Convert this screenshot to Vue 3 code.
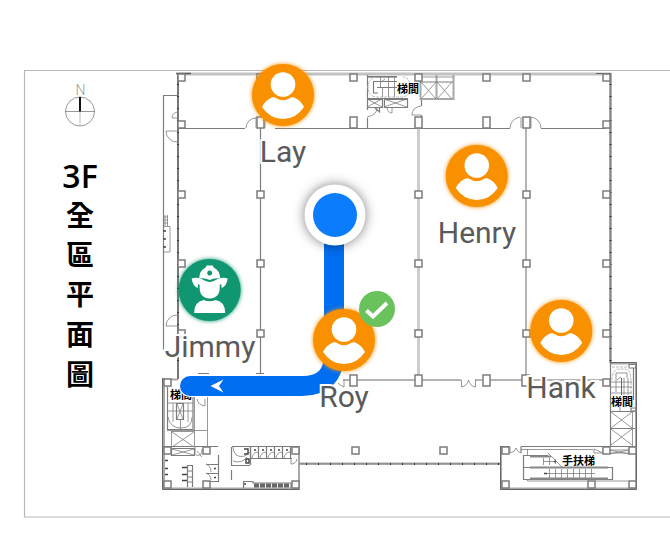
<script setup>
const people = [
  { name: 'Lay', x: 283, y: 95, role: 'member' },
  { name: 'Henry', x: 477, y: 176, role: 'member' },
  { name: 'Jimmy', x: 210, y: 290, role: 'guide' },
  { name: 'Roy', x: 344, y: 340, role: 'member', checked: true },
  { name: 'Hank', x: 561, y: 331, role: 'member' }
]
const place = (p) => ({ left: (p.x / 670) * 100 + '%', top: (p.y / 543) * 100 + '%' })

const title = ['全', '區', '平', '面', '圖']

const grid = [181, 260, 418, 526, 606]
const columns = [
  ...[181, 260, 353, 418, 486, 526, 606].map((x) => [x, 77]),
  [181, 124],
  [606, 124],
  ...[194, 263, 333].flatMap((y) => grid.map((x) => [x, y])),
  [606, 382],
  [355, 450],
  [443, 450],
  [167, 382],
  [167, 450],
  [206, 450],
  [295, 450],
  [167, 484],
  [206, 484],
  [295, 484],
  [505, 450],
  [606, 450],
  [632, 450],
  [505, 484],
  [591, 484],
  [632, 484]
]
const tallColumns = [
  ...[260, 353, 418, 486, 526].map((x) => [x, 122]),
  ...[353, 418, 486, 525].map((x) => [x, 380])
]
const range = (from, to, step) => {
  const out = []
  for (let v = from; v <= to; v += step) out.push(v)
  return out
}
const wallTicks = range(84, 370, 12)
const southTicks = range(306, 498, 12)
</script>

<template>
  <main class="map">
    <svg class="plan" viewBox="0 0 670 543" role="img" aria-label="3F 全區平面圖">
      <!-- sheet frame -->
      <path class="frame" d="M672 70.500H24.500V517H672" />

      <!-- compass -->
      <text class="north" x="80.500" y="95">N</text>
      <circle class="thin" cx="80" cy="111.500" r="14.500" />
      <path class="thin" d="M65 111.500H95" />
      <path class="faint" d="M80 111V126" />
      <path class="needle" d="M80 97V111.500" />

      <!-- sheet title -->
      <text class="floor" x="80" y="188">3F</text>
      <text v-for="(c, i) in title" :key="c" class="title" x="80" :y="226 + i * 40 - (i > 1 ? 1 : 0)">{{ c }}</text>

      <!-- outer walls -->
      <path class="double" d="M178 74H611" />
      <path class="wall" d="M178 73V379M176 73.500H191" />
      <path class="grey" d="M610 73V363" />
      <path class="wall1" d="M611 73V363M596 73.500H611" />
      <path v-for="y in wallTicks" :key="'w' + y" class="tick" :d="`M609.5 ${y}.5H611.5M177 ${y}.5H179`" />
      <path class="line" d="M177 95.500H163.500V350" />
      <path class="thin" d="M172 118A6 6 0 0 1 178 112M172 118H178M166 131H178M166 131A11 11 0 0 0 178 142M166 326H178M166 326A11 11 0 0 1 178 315" />
      <path class="thin" d="M163 226.500H170V252H163M163 217H168M163 220H168M163 223H168M165 215V226M167.500 215V226" />
      <path class="dots" d="M163 231H166M163 239H166M163 247H166" />

      <!-- inner walls -->
      <path class="line" d="M178 128.500H245M275 128.500H510M541 128.500H606" />
      <path class="line" d="M260.500 128V374" />
      <path class="pale" d="M418.500 128V376" />
      <path class="grey2" d="M526 128V380" />
      <path class="grey2" d="M343 380H461M475 380H482M490 380H606" />
      <path class="thin" d="M246 128A10 10 0 0 1 256 118M256 117V128M265 117V128M510 128A12 11 0 0 1 520 117M541 128A12 11 0 0 0 531 117M521 117V128M531 117V128" />
      <path class="thin" d="M461.500 380V387Q467 386 468.500 380Q470 386 475.500 387V380M344 380V387Q340 385 338 383" />
      <path class="line" d="M198 373.500H209M256 373.500H264" />

      <!-- north stair and lifts -->
      <path class="grey" d="M367 77H397M420.500 77V99H453.500V75M436.500 75V99" />
      <path class="line" d="M367.500 75V98.500H408M420 82H453" />
      <path class="thin" d="M420 77H453M421 82L436 99M436 82L421 99M437 82L452 99M452 82L437 99" />
      <path class="faint dash" d="M376 77Q368 79 368 88Q369 97 377 97H403Q410 96 410 86Q410 78 403 77" />
      <path class="line" d="M373 81.500H397M373.500 81.500V93H378M377 87.500H397M368 76.500H397" />
      <path class="thin" d="M380.500 77V87M388.500 77V97M394.500 77V97M382.500 88V97M381 82L385 79" />
      <path class="line" d="M367.500 99.500H382.500V107.500H367.500ZM384.500 99.500H407.500V107.500H384.500Z" />
      <path class="thin" d="M367 99L382 107M382 99L367 107M384 99L407 107M407 99L384 107" />
      <path class="line" d="M367.500 107V110M367.500 118V128M375 108L379.500 112V107M421.500 100V106M421.500 115V128" />
      <path class="thin" d="M367 117Q377 115 377 108M387 108Q388 113 392 113V107M421.500 106Q412 107 412 115H421" />

      <!-- south-west stair, lift and wash rooms -->
      <path class="grey" d="M164 378V489M162 379.500H178M162 488.500H299V446" />
      <path class="wall1" d="M162.500 378V489.500H299.500M178 378V379" />
      <path class="line" d="M167.500 387V429.500H193V396M163 446.500H218M232 446.500H299" />
      <path class="thin" d="M194.500 397V446M207.500 397V446M167 430.500H207M168 403H193M168 411H193M173 403V422M188 403V422M180.500 419V429M168 417Q170 428 181 428Q192 428 192 417" />
      <path class="line" d="M176.500 403.500H183.500V419.500H176.500Z" />
      <path class="thin" d="M177 404L183 419M183 404L177 419M171.500 431V446M171 431.500H194M172 432L194 447M194 432L172 447" />
      <path class="line" d="M171.500 448.500H194.500V455.500H171.500Z" />
      <path class="thin" d="M172 449L194 455M194 449L172 455M197 399Q198 405 205 406V399M195 455V447M202 449Q202 457 196 455M197 451L202 457" />
      <path class="line" d="M218.500 455V482M206 464.500H218M206 473.500H218M206 481.500H218M231.500 447V465.500H250M231.500 470V480M250.500 447V465" />
      <path class="thin" d="M206 464Q211 466 211 472M206 473Q211 475 211 480" />
      <path class="dots" d="M214 468.500H216M214 477.500H216M182 467.500H187M182 474.500H187M182 480.500H187M165 460.500H168M165 468.500H168M165 474.500H168" />
      <path class="line" d="M187.500 465V487M192.500 465V487M187 465.500H193M187 471H193M187 477H193M187 482H193" />
      <path class="thin" d="M233 447Q234 459 245 456L250 452M233 461Q242 464 247 457" />
      <path class="fixture" d="M244 449H248V454H244M246 459H249V463H246Z" />
      <path class="line" d="M250.500 447V458.500H292M258.500 447V458M266.500 447V458M274.500 447V458M282.500 447V458M290.500 447V458" />
      <path class="thin" d="M252 458Q253 452 258 452M260 458Q261 452 266 452M268 458Q269 452 274 452M276 458Q277 452 282 452M284 458Q285 452 290 452M291 459V464Q296 464 297 459" />
      <path class="line" d="M243.500 481V488M243 481.500H253V483H291V488" />
      <path class="dots" d="M254 450H256M262 450H264M270 450H272M278 450H280M286 450H288M244 484H246" />
      <path class="fixtures" d="M254 485.500H290" />

      <!-- south wall -->
      <path class="grey" d="M299 463.500H500" />
      <path class="line" d="M299 464H500" />
      <path v-for="x in southTicks" :key="'s' + x" class="tick" :d="`M${x}.5 463V465`" />

      <!-- east stair and lifts -->
      <path class="grey" d="M610 363.500H636V489M501 446V488.500H636" />
      <path class="wall1" d="M610 362.500H636.500V489.500H500.500V446" />
      <path class="line" d="M610.500 363V446M633.500 368V400M629 364.500H636V368H629Z" />
      <path class="faint dash" d="M612 367H630M612 380Q612 369 620 369H625Q631 370 631 381V394" />
      <path class="thin" d="M616 392V373H627V378M611 382H632M611 387H632M611 393H632M624 378V395M628 378V395M617 380L621 377" />
      <path class="wall1" d="M621.500 378V395" />
      <path class="line" d="M610.500 411.500H635M610.500 428.500H635M631 408H636V411H631Z" />
      <path class="thin" d="M611 412L632 428M632 412L611 428M611 429L632 445M632 429L611 445M632.500 412V446M620 407V411" />

      <!-- escalator hall -->
      <path class="line" d="M501 446.500H510M521 446.500H636M521 446.500V453" />
      <path class="thin" d="M510 447V453Q515 452 516 448Q517 452 521 453M521 449.500H593M594 449V453H603M594 449L603 453M609 450H629V453H609ZM609 450L629 454M629 450L609 454M527.500 449V455M527.500 480V481H590M595 481H628" />
      <path class="line" d="M548 455.500H523.500V467.500H562" />
      <path class="line" d="M523.500 467.500H612.500V479.500H523.500Z" />
      <path class="rail" d="M530 456.500H551M530 467.500H608M530 478.500H608" />
      <path class="thin" d="M548 453L563 468M543 461.500H555M543.500 458V465M549.500 458V465M555.500 459V464M546 473.500H595M549.500 469V478M555.500 469V478M561.500 469V478M567.500 469V478M573.500 469V478M579.500 469V478M585.500 469V478M591.500 469V478" />
      <path class="dots" d="M544 473.500H547M554 461.500H556" />

      <!-- structural columns -->
      <rect v-for="c in columns" :key="'c' + c" class="column" :x="c[0] - 3" :y="c[1] - 3" width="7" height="7" />
      <rect v-for="c in tallColumns" :key="'t' + c" class="column" :x="c[0] - 3" :y="c[1] - 5" width="7" height="11" />

      <text class="room" x="397" y="93">梯間</text>
      <text class="room" x="170" y="399">梯間</text>
      <text class="room" x="611" y="406">梯間</text>
      <text class="room" x="562" y="465">手扶梯</text>

      <!-- route -->
      <path class="route-edge" d="M334 215V354Q334 386 302 386H190" />
      <path class="route" d="M334 215V354Q334 386 302 386H190" />
      <path class="arrow" d="M210.500 386L223.500 379.500L219 386L223.500 392.500Z" />
      <circle class="halo" cx="335" cy="215" r="30.500" />
      <circle class="target" cx="335" cy="215" r="22" />
    </svg>

    <button v-for="p in people" :key="p.name" type="button" class="pin" :style="place(p)">
      <span class="avatar" :class="p.role">
        <svg v-if="p.role === 'member'" class="glyph" viewBox="-31 -31 62 62" aria-hidden="true">
          <circle cx="0" cy="-10.500" r="12.300" />
          <path d="M-21 12Q-17 4.500 -10.500 2.300Q-8.500 1.800 -7 3Q0 7.500 7 3Q8.500 1.800 10.500 2.300Q17 4.500 21 12Q13 24 0 24Q-13 24 -21 12Z" />
        </svg>
        <svg v-else class="glyph" viewBox="-31 -31 62 62" aria-hidden="true">
          <path fill-rule="evenodd" d="M-10.500 -11.500Q-10 -20 -4 -22.500L-3 -24.500H3L4 -22.500Q10 -20 10.500 -11.500Q5 -12.500 0 -10Q-5 -12.500 -10.500 -11.500ZM0 -19.500A2.500 2.500 0 1 0 0.010 -19.500Z" />
          <path d="M-18 -11.500Q-13 -13 -8 -11Q-3 -8 0 -8Q3 -8 8 -11Q13 -13 18 -11.500Q17 -4 12 -2L11.500 -6L10 -5Q11 8 0 8.500Q-11 8 -10 -5L-11.500 -6L-12 -2Q-17 -4 -18 -11.500Z" />
          <path d="M-15.500 23Q-15.500 11.500 -6 10Q0 12.500 6 10Q15.500 11.500 15.500 23Z" />
        </svg>
        <svg v-if="p.checked" class="badge" viewBox="0 0 36 36" aria-label="checked">
          <circle cx="18" cy="18" r="18" />
          <path d="M7.500 19.500L14 25.500L28 12" />
        </svg>
      </span>
      <span class="name">{{ p.name }}</span>
    </button>
  </main>
</template>

<style>
body {
  margin: 0;
  background: #fff;
}
</style>

<style scoped>
.map {
  position: relative;
  overflow: hidden;
  background: #fff;
}
.plan {
  display: block;
  width: 100%;
  height: auto;
}
.plan path,
.plan circle {
  fill: none;
}
.plan .frame { stroke: #b8b8b8; stroke-width: 1.2; }
.plan .thin { stroke: #7d7d7d; stroke-width: 0.8; }
.plan .faint { stroke: #bbb; stroke-width: 1; }
.plan .dash { stroke-dasharray: 3 1; }
.plan .line { stroke: #7c7c7c; stroke-width: 1.2; }
.plan .double { stroke: #c2c2c2; stroke-width: 3; }
.plan .pale { stroke: #cdcdcd; stroke-width: 3; }
.plan .grey { stroke: #a8a8a8; stroke-width: 2; }
.plan .grey2 { stroke: #b4b4b4; stroke-width: 2; }
.plan .wall { stroke: #555; stroke-width: 1.6; }
.plan .wall1 { stroke: #666; stroke-width: 1; }
.plan .rail { stroke: #888; stroke-width: 2; }
.plan .tick { stroke: #333; stroke-width: 1; }
.plan .dots { stroke: #444; stroke-width: 1.4; }
.plan .fixture { stroke: #444; stroke-width: 1.4; }
.plan .fixtures { stroke: #666; stroke-width: 4; stroke-dasharray: 5 1; }
.plan .needle { stroke: #111; stroke-width: 2; }
.column { fill: #fff; stroke: #7c7c7c; stroke-width: 1.5; }
.north {
  font: 300 14px Roboto, sans-serif;
  fill: #999;
  text-anchor: middle;
}
.floor {
  font: 600 32px "Open Sans", sans-serif;
  text-anchor: middle;
}
.title {
  font: 700 28px "Noto Sans CJK TC", sans-serif;
  text-anchor: middle;
}
.room {
  font: 700 11px "Noto Sans CJK TC", sans-serif;
}
.plan .route-edge {
  stroke: #fff;
  stroke-width: 22;
  stroke-linecap: round;
}
.plan .route {
  stroke: #006ef0;
  stroke-width: 20;
  stroke-linecap: round;
}
.plan .arrow { fill: #fff; }
.plan .halo {
  fill: #fff;
  filter: drop-shadow(0 0 6px rgba(0, 0, 0, 0.5));
}
.plan .target { fill: #0a7cfc; }

.pin {
  position: absolute;
  display: flex;
  flex-direction: column;
  align-items: center;
  gap: 8px;
  padding: 0;
  border: 0;
  background: none;
  transform: translate(-50%, -31px);
  cursor: pointer;
}
.avatar {
  position: relative;
  width: 62px;
  height: 62px;
  border-radius: 50%;
}
.member {
  background: #f99000;
  box-shadow: 0 0 4px #f99000;
}
.guide {
  background: #119672;
  box-shadow: 0 0 4px #119672;
}
.glyph {
  display: block;
  width: 100%;
  height: 100%;
  fill: #fff;
}
.badge {
  position: absolute;
  top: -18px;
  right: -20px;
  width: 36px;
  height: 36px;
  fill: #69c25b;
}
.badge path {
  fill: none;
  stroke: #fff;
  stroke-width: 4;
}
.name {
  font: 400 30px/36px Roboto, sans-serif;
  color: #5a5a5a;
  -webkit-text-stroke: 4px #fff;
  paint-order: stroke fill;
}
</style>
